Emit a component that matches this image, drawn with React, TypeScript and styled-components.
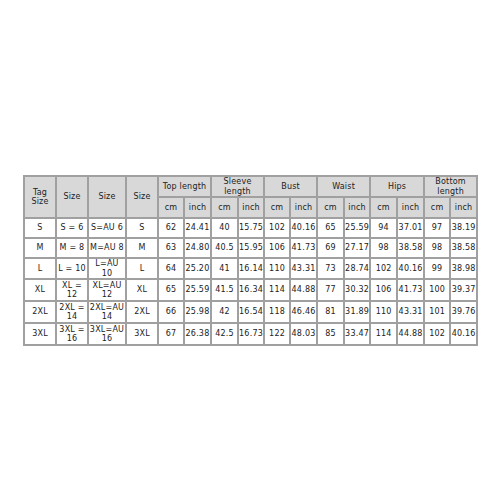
import React from "react";
import styled, { createGlobalStyle } from "styled-components";

const Global = createGlobalStyle`
  html, body { margin: 0; padding: 0; background: #ffffff; }
  #root { width: 500px; height: 500px; }
`;

const Page = styled.div`
  width: 500px;
  height: 500px;
  box-sizing: border-box;
  padding: 175px 0 0 23px;
  background: #fff;
`;

const Table = styled.table`
  border-collapse: collapse;
  table-layout: fixed;
  width: 453px;
  font-family: "DejaVu Sans", Verdana, sans-serif;
  font-size: 8px;
  letter-spacing: 0.2px;
  color: #222;
  border: 2px solid #a8a8a8;
`;

const Cell = styled.td<{ $head?: boolean }>`
  border: 2px solid #a0a0a0;
  background: ${(p) => (p.$head ? "#d8d8d8" : "#ffffff")};
  text-align: center;
  vertical-align: middle;
  padding: 0;
  line-height: 9.5px;
  overflow: hidden;
  white-space: nowrap;
`;

const Row = styled.tr<{ $h: number }>`
  height: ${(p) => p.$h}px;
`;

const widths = [32, 32, 38, 32, 26, 27, 27, 26, 26, 27, 27, 26, 27, 27, 26, 27];

const groups = [
  ["Top length"],
  ["Sleeve", "length"],
  ["Bust"],
  ["Waist"],
  ["Hips"],
  ["Bottom", "length"],
];

type R = { tag: string; size: string[]; au: string[]; s: string; vals: string[]; h: number };

const rows: R[] = [
  { tag: "S", size: ["S = 6"], au: ["S=AU 6"], s: "S", vals: ["62", "24.41", "40", "15.75", "102", "40.16", "65", "25.59", "94", "37.01", "97", "38.19"], h: 20 },
  { tag: "M", size: ["M = 8"], au: ["M=AU 8"], s: "M", vals: ["63", "24.80", "40.5", "15.95", "106", "41.73", "69", "27.17", "98", "38.58", "98", "38.58"], h: 20 },
  { tag: "L", size: ["L = 10"], au: ["L=AU", "10"], s: "L", vals: ["64", "25.20", "41", "16.14", "110", "43.31", "73", "28.74", "102", "40.16", "99", "38.98"], h: 21 },
  { tag: "XL", size: ["XL =", "12"], au: ["XL=AU", "12"], s: "XL", vals: ["65", "25.59", "41.5", "16.34", "114", "44.88", "77", "30.32", "106", "41.73", "100", "39.37"], h: 22 },
  { tag: "2XL", size: ["2XL =", "14"], au: ["2XL=AU", "14"], s: "2XL", vals: ["66", "25.98", "42", "16.54", "118", "46.46", "81", "31.89", "110", "43.31", "101", "39.76"], h: 22 },
  { tag: "3XL", size: ["3XL =", "16"], au: ["3XL=AU", "16"], s: "3XL", vals: ["67", "26.38", "42.5", "16.73", "122", "48.03", "85", "33.47", "114", "44.88", "102", "40.16"], h: 22 },
];

const Lines = ({ lines }: { lines: string[] }) => (
  <>
    {lines.map((l, i) => (
      <React.Fragment key={i}>
        {i > 0 && <br />}
        {l}
      </React.Fragment>
    ))}
  </>
);

export default function App() {
  return (
    <>
      <Global />
      <Page>
        <Table>
          <colgroup>
            {widths.map((w, i) => (
              <col key={i} style={{ width: w }} />
            ))}
          </colgroup>
          <tbody>
            <Row $h={21}>
              <Cell $head rowSpan={2}>
                Tag
                <br />
                Size
              </Cell>
              <Cell $head rowSpan={2}>Size</Cell>
              <Cell $head rowSpan={2}>Size</Cell>
              <Cell $head rowSpan={2}>Size</Cell>
              {groups.map((g, i) => (
                <Cell $head colSpan={2} key={i}>
                  <Lines lines={g} />
                </Cell>
              ))}
            </Row>
            <Row $h={21}>
              {groups.map((_, i) => (
                <React.Fragment key={i}>
                  <Cell $head>cm</Cell>
                  <Cell $head>inch</Cell>
                </React.Fragment>
              ))}
            </Row>
            {rows.map((r) => (
              <Row $h={r.h} key={r.tag}>
                <Cell>{r.tag}</Cell>
                <Cell>
                  <Lines lines={r.size} />
                </Cell>
                <Cell>
                  <Lines lines={r.au} />
                </Cell>
                <Cell>{r.s}</Cell>
                {r.vals.map((v, i) => (
                  <Cell key={i}>{v}</Cell>
                ))}
              </Row>
            ))}
          </tbody>
        </Table>
      </Page>
    </>
  );
}
